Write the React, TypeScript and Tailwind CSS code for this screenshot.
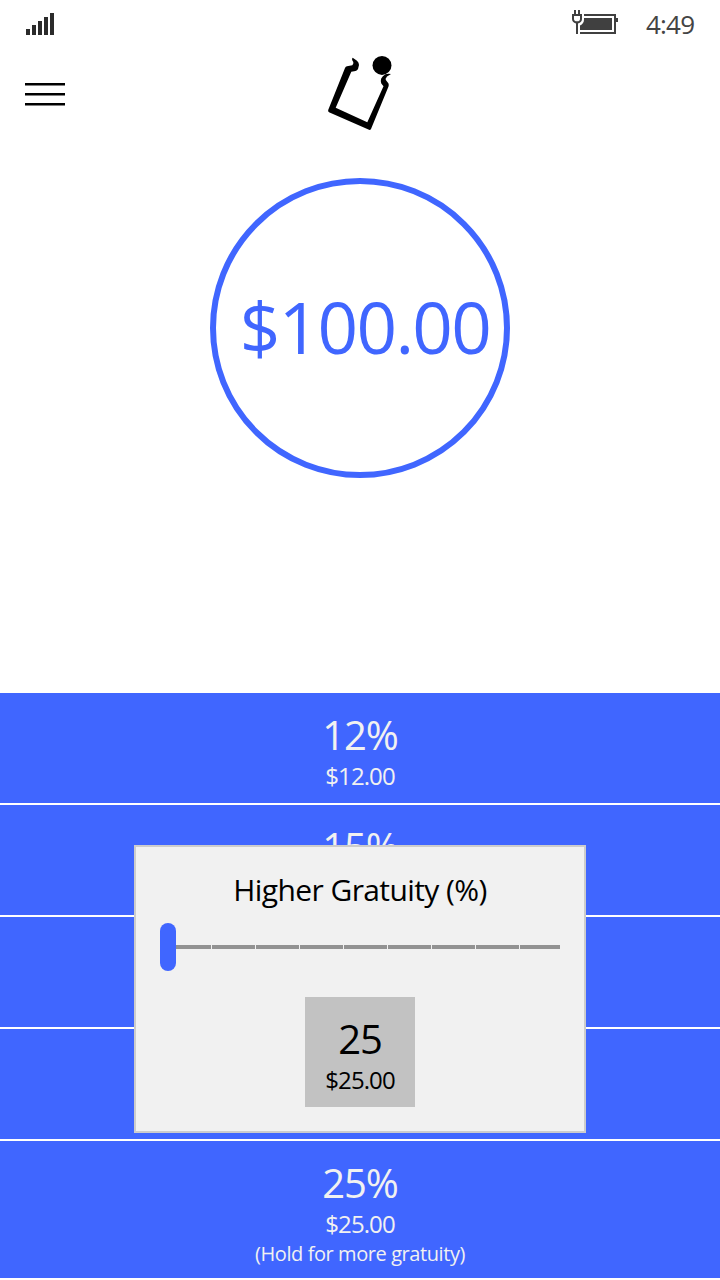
type Tip = { percent: string; amount?: string };

const tips: (Tip | null)[] = [{ percent: "12%", amount: "$12.00" }, { percent: "15%" }, null, null];

function SignalIcon() {
  return (
    <svg width="28" height="22" viewBox="0 0 28 22" fill="#2b2b2b" shapeRendering="crispEdges">
      <path d="M0 16h4v6H0zM6 12h4v10H6zM12 8h4v14h-4zM18 4h4v18h-4zM24 0h4v22h-4z" />
    </svg>
  );
}

function BatteryIcon() {
  return (
    <svg width="46" height="24" viewBox="0 0 46 24" fill="#404040">
      <path d="M2 0h2v4h2V0h2v4h2v5q0 3-4 4.500V24H4V13.500Q0 12 0 9V4h2z" />
      <path d="M2 6h6v3q0 2.300-3 2.300T2 9z" fill="#fff" />
      <path d="M12 4h32v4h2v4h-2v12H8v-2h34V6H12z" />
      <path d="M12 8h28v12H8v-4.500q4-2 4-6z" />
    </svg>
  );
}

function Logo() {
  return (
    <svg width="66" height="76" viewBox="0 0 66 76">
      <circle cx="55" cy="10.400" r="9.500" />
      <path d="M25.700 2.700L30 5.800Q32 7.500 32 10L31 14Q30.300 15.700 28.500 15.900L24.300 16.700L8.700 52.800L40.300 67.300L56.500 31.300L54.300 28.500Q53.300 26 54.200 23.500Q55.500 21 58.300 19.300Q61 18.300 64 19L60 21.500Q58 23.500 59.200 25.500L61.500 28.500Q62 30 61.500 31.500L44 74Q43.300 75.300 42 74.800L2 57.200Q0.700 56.500 1.200 55L18 13Q18.700 11.500 20 11.300L25.300 10.300Q26.800 8.500 26.300 7Q24.200 4 25.700 2.700z" />
    </svg>
  );
}

function TipText({ percent, amount }: Tip) {
  return (
    <>
      <div className="mt-[22px] text-[40px] leading-10 tracking-[-1.1px]">{percent}</div>
      {amount && <div className="mt-1 mb-px text-2xl leading-[33px] tracking-[-0.9px]">{amount}</div>}
    </>
  );
}

function Slider() {
  return (
    <div className="mt-[13px] flex h-12 w-[400px] items-center">
      <div className="h-12 w-4 rounded-full bg-[#4066ff]" />
      <div className="grid h-1 flex-1 grid-cols-[35px_repeat(7,43px)_40px] gap-px">
        {Array.from({ length: 9 }, (_, i) => (
          <div key={i} className="bg-[#929292]" />
        ))}
      </div>
    </div>
  );
}

export default function App() {
  return (
    <div className="relative flex h-[1280px] w-[720px] flex-col overflow-hidden bg-white font-['Open_Sans','Noto_Sans',sans-serif] font-[370]">
      <div className="flex h-12 items-start pl-[26px] pr-[25px]">
        <div className="pt-[13px]">
          <SignalIcon />
        </div>
        <div className="ml-auto pt-2.5">
          <BatteryIcon />
        </div>
        <div className="ml-7 w-[49px] pt-2 text-[26px] leading-8 tracking-[-0.8px] whitespace-nowrap text-[#444]">4:49</div>
      </div>

      <header className="grid h-[130px] grid-cols-3 px-[25px]">
        <div className="pt-[35px]">
          <svg width="40" height="23" viewBox="0 0 40 23">
            <path d="M0 0h40v2.500H0zM0 10h40v2.500H0zM0 20h40v2.500H0z" />
          </svg>
        </div>
        <div className="flex justify-center pt-[7px]">
          <Logo />
        </div>
      </header>

      <main className="flex flex-1 justify-center">
        <div className="flex size-[300px] items-center justify-center rounded-full border-[6px] border-[#4066ff] pb-[3px] pl-2.5 text-[71px] leading-none tracking-[-1.7px] text-[#4066ff]">
          $100.00
        </div>
      </main>

      <section className="flex flex-col gap-0.5 pb-0.5 text-center text-[#f1f1f1]">
        {tips.map((tip, i) => (
          <div key={i} className="flex h-[110px] flex-col bg-[#4066ff]">
            {tip && <TipText {...tip} />}
          </div>
        ))}
        <div className="flex h-[137px] flex-col bg-[#4066ff]">
          <TipText percent="25%" amount="$25.00" />
          <div className="mt-px text-xl leading-6 tracking-[-0.42px]">(Hold for more gratuity)</div>
        </div>
      </section>

      <div className="absolute top-[845px] left-[134px] flex h-72 w-[452px] flex-col items-center border-2 border-[#ccc] bg-[#f1f1f1] pt-[23px] text-black">
        <h1 className="text-[30px] leading-10 font-[370] tracking-[-0.6px]">Higher Gratuity (%)</h1>
        <Slider />
        <div className="mt-[26px] flex size-[110px] flex-col bg-[#c2c2c2] text-center">
          <TipText percent="25" amount="$25.00" />
        </div>
      </div>
    </div>
  );
}
